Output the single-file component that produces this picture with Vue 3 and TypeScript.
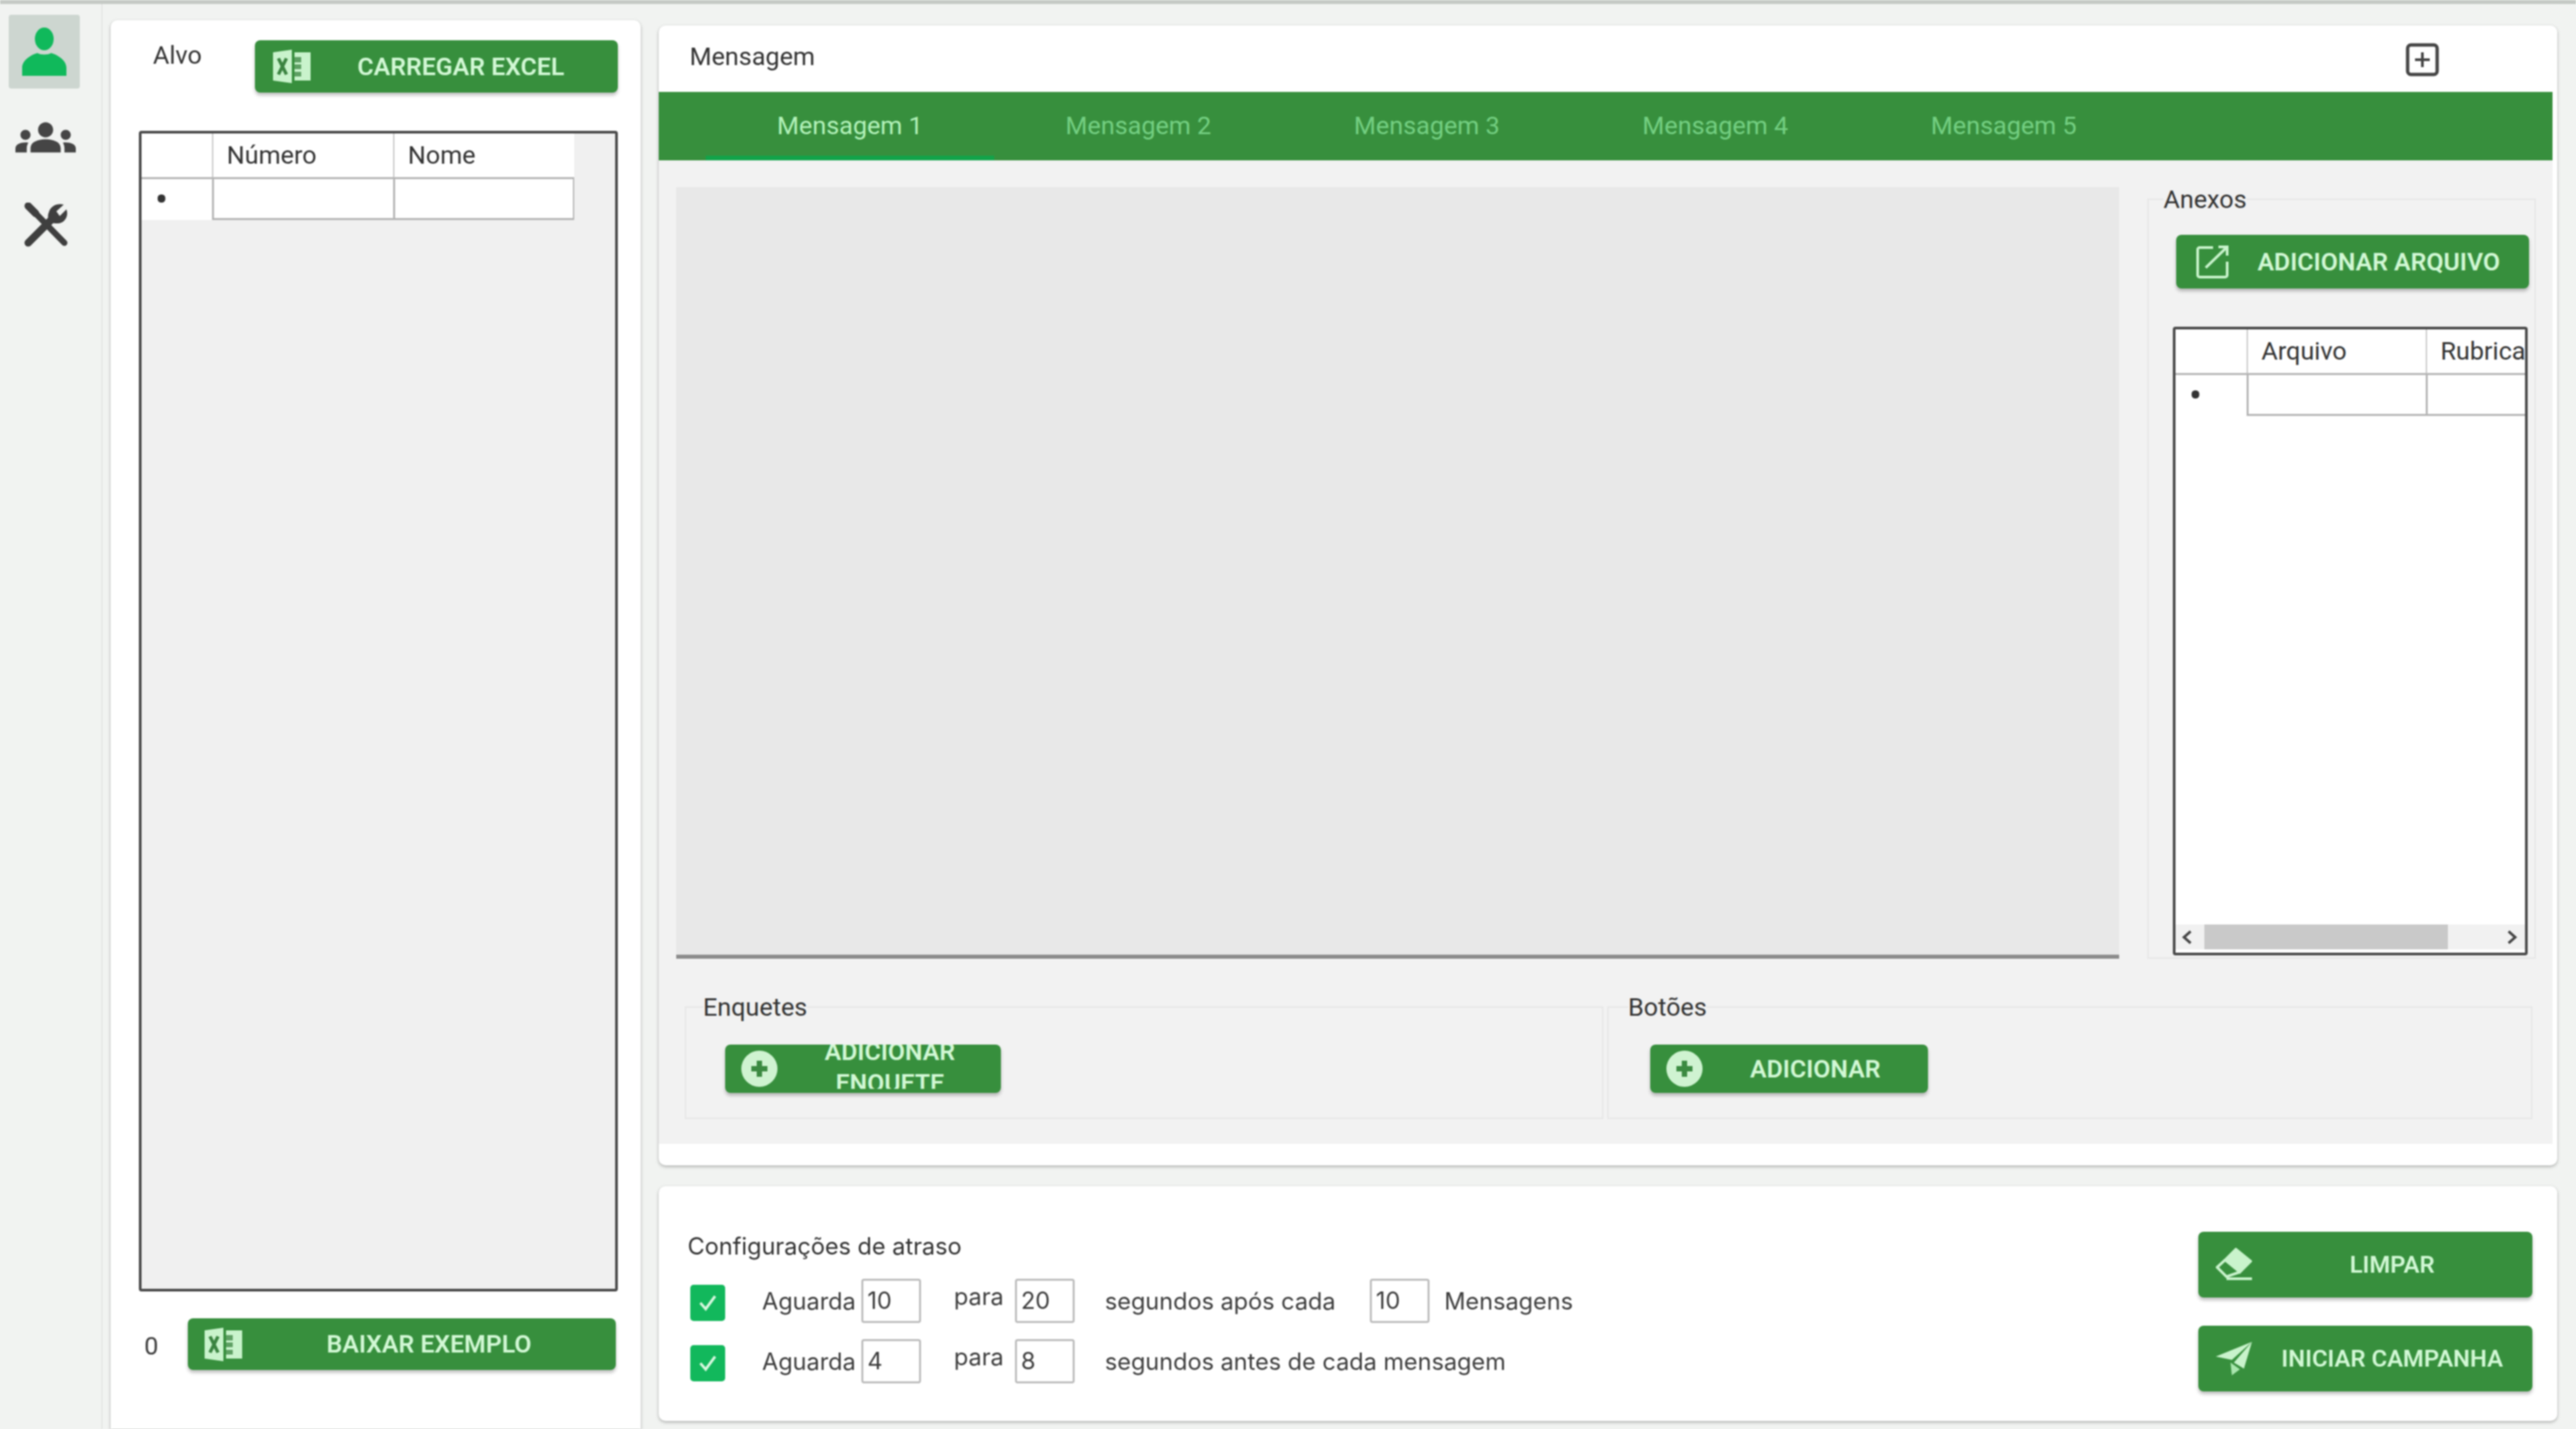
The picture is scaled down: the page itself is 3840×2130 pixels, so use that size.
<script setup lang="ts">
const tabs: string[] = ['Mensagem 1', 'Mensagem 2', 'Mensagem 3', 'Mensagem 4', 'Mensagem 5']
</script>

<template>
  <div class="app">
    <!-- Side rail -->
    <nav class="rail">
      <div class="rail-item active">
        <svg viewBox="0 0 68 72" width="68" height="72">
          <ellipse cx="34" cy="17" rx="14" ry="17" fill="#10b95b" />
          <path d="M1 72V60C1 48 16 40 24 38c3 3 17 3 20 0 8 2 23 10 23 22v12z" fill="#10b95b" />
        </svg>
      </div>
      <div class="rail-item group">
        <svg viewBox="0 2 24 18" width="90" height="68">
          <path fill="#454545" d="M12 12.75c1.63 0 3.07.39 4.24.9 1.08.48 1.76 1.56 1.76 2.73V18H6v-1.61c0-1.18.68-2.26 1.76-2.73 1.17-.52 2.61-.91 4.24-.91zM4 13c1.1 0 2-.9 2-2s-.9-2-2-2-2 .9-2 2 .9 2 2 2zm1.13 1.1c-.37-.06-.74-.1-1.13-.1-.99 0-1.93.21-2.78.58C.48 14.9 0 15.62 0 16.43V18h4.5v-1.61c0-.83.23-1.61.63-2.29zM20 13c1.1 0 2-.9 2-2s-.9-2-2-2-2 .9-2 2 .9 2 2 2zm4 3.43c0-.81-.48-1.53-1.22-1.85-.85-.37-1.79-.58-2.78-.58-.39 0-.76.04-1.13.1.4.68.63 1.46.63 2.29V18H24v-1.57zM12 6c1.66 0 3 1.34 3 3s-1.34 3-3 3-3-1.34-3-3 1.34-3 3-3z" />
        </svg>
      </div>
      <div class="rail-item tools">
        <svg viewBox="0 0 66 66" width="66" height="66" fill="none" stroke="#3f3f3f" stroke-linecap="round">
          <path d="M6 5 17 16" stroke-width="11" />
          <path d="M17 16 60 60" stroke-width="9" />
          <path d="M6 60 40 26" stroke-width="11" />
          <path d="M37 14C39 5 50 0 59 3L48 13 53 20 63 10C67 20 60 31 50 31 46 31 40 31 37 27 35 22 35 18 37 14z" fill="#3f3f3f" stroke="none" />
        </svg>
      </div>
    </nav>

    <!-- Target list -->
    <section class="card target">
      <div class="target-head">
        <span class="title alvo">Alvo</span>
        <button class="btn excel-top">
          <svg class="ico" viewBox="0 0 56 50" width="56" height="50">
            <path d="M0 4 28 0V50L0 46z" fill="#c9f3cc" />
            <path d="M8 13 20 37M20 13 8 37" stroke="#3a8340" stroke-width="5" />
            <path d="M32 4H56V46H32z" fill="#c9f3cc" />
            <path d="M32 11H42V19H32zM32 22H42V29H32zM32 33H42V40H32z" fill="#3a8340" opacity=".75" />
          </svg>
          <span class="btn-label">CARREGAR EXCEL</span>
        </button>
      </div>

      <div class="sheet target-sheet">
        <table class="grid">
          <colgroup><col style="width: 106px" /><col style="width: 270px" /><col style="width: 268px" /></colgroup>
          <thead>
            <tr><th></th><th>Número</th><th>Nome</th></tr>
          </thead>
          <tbody>
            <tr><td class="dot">•</td><td></td><td></td></tr>
          </tbody>
        </table>
      </div>

      <div class="target-foot">
        <span class="count">0</span>
        <button class="btn excel-bottom">
          <svg class="ico" viewBox="0 0 56 50" width="56" height="50">
            <path d="M0 4 28 0V50L0 46z" fill="#c9f3cc" />
            <path d="M8 13 20 37M20 13 8 37" stroke="#3a8340" stroke-width="5" />
            <path d="M32 4H56V46H32z" fill="#c9f3cc" />
            <path d="M32 11H42V19H32zM32 22H42V29H32zM32 33H42V40H32z" fill="#3a8340" opacity=".75" />
          </svg>
          <span class="btn-label">BAIXAR EXEMPLO</span>
        </button>
      </div>
    </section>

    <div class="main">
      <!-- Message editor -->
      <section class="card message">
        <header class="message-head">
          <span class="title">Mensagem</span>
          <svg class="add-tab" viewBox="0 0 50 50" width="50" height="50" fill="none" stroke="#444" stroke-width="5">
            <rect x="3" y="3" width="44" height="44" rx="5" />
            <path d="M25 14V36M14 25H36" stroke-width="4" />
          </svg>
        </header>

        <div class="tabs">
          <div v-for="(tab, i) in tabs" :key="tab" class="tab" :class="{ current: i === 0 }">{{ tab }}</div>
        </div>

        <div class="message-body">
          <div class="compose">
            <div class="editor"></div>
            <fieldset class="box anexos">
              <legend>Anexos</legend>
              <button class="btn add-file">
                <svg class="ico" viewBox="0 0 48 50" width="48" height="50" fill="none" stroke="#c9f3cc" stroke-width="4">
                  <path d="M25 4H5A3 3 0 0 0 2 7V45A3 3 0 0 0 5 48H43A3 3 0 0 0 46 45V25" />
                  <path d="M14 34 45 4M33 3H46V16" />
                </svg>
                <span class="btn-label">ADICIONAR ARQUIVO</span>
              </button>
              <div class="sheet files-sheet">
                <div class="files-view">
                  <table class="grid files-grid">
                    <colgroup><col style="width: 107px" /><col style="width: 267px" /><col style="width: 200px" /></colgroup>
                    <thead>
                      <tr><th></th><th>Arquivo</th><th>Rubrica</th></tr>
                    </thead>
                    <tbody>
                      <tr><td class="dot">•</td><td></td><td></td></tr>
                    </tbody>
                  </table>
                </div>
                <div class="scrollbar">
                  <svg viewBox="0 0 16 20" width="18" height="22" fill="none" stroke="#444" stroke-width="3.5"><path d="M13 2 4 10l9 8" /></svg>
                  <div class="track"><div class="thumb"></div></div>
                  <svg viewBox="0 0 16 20" width="18" height="22" fill="none" stroke="#444" stroke-width="3.5"><path d="M3 2l9 8-9 8" /></svg>
                </div>
              </div>
            </fieldset>
          </div>

          <div class="extras">
            <fieldset class="box enquetes">
              <legend>Enquetes</legend>
              <button class="btn add-small">
                <svg class="ico" viewBox="0 0 54 54" width="54" height="54">
                  <circle cx="27" cy="27" r="27" fill="#cff3d1" />
                  <path d="M27 15V39M15 27H39" stroke="#3b8a41" stroke-width="8" />
                </svg>
                <span class="btn-label wrap">ADICIONAR ENQUETE</span>
              </button>
            </fieldset>
            <fieldset class="box botoes">
              <legend>Botões</legend>
              <button class="btn add-small wide">
                <svg class="ico" viewBox="0 0 54 54" width="54" height="54">
                  <circle cx="27" cy="27" r="27" fill="#cff3d1" />
                  <path d="M27 15V39M15 27H39" stroke="#3b8a41" stroke-width="8" />
                </svg>
                <span class="btn-label">ADICIONAR</span>
              </button>
            </fieldset>
          </div>
        </div>
      </section>

      <!-- Delay settings -->
      <section class="card delay">
        <div class="delay-form">
          <div class="delay-title">Configurações de atraso</div>
          <div class="delay-row">
            <span class="check"><svg viewBox="0 0 30 30" width="30" height="30" fill="none" stroke="#d8f7df" stroke-width="4"><path d="M4 15 12 24 26 5" /></svg></span>
            <span class="wait">Aguarda</span>
            <span class="field">10</span>
            <span class="para">para</span>
            <span class="field">20</span>
            <span class="secs after">segundos após cada</span>
            <span class="field">10</span>
            <span class="msgs">Mensagens</span>
          </div>
          <div class="delay-row">
            <span class="check"><svg viewBox="0 0 30 30" width="30" height="30" fill="none" stroke="#d8f7df" stroke-width="4"><path d="M4 15 12 24 26 5" /></svg></span>
            <span class="wait">Aguarda</span>
            <span class="field">4</span>
            <span class="para">para</span>
            <span class="field">8</span>
            <span class="secs">segundos antes de cada mensagem</span>
          </div>
        </div>

        <div class="actions">
          <button class="btn action">
            <svg class="ico" viewBox="0 0 54 50" width="54" height="50" fill="none" stroke="#c9f3cc" stroke-width="4">
              <path d="M30 2 52 20 36 36 14 18z" fill="#c9f3cc" />
              <path d="M14 18 2 29 16 43 36 36M16 46H54" />
            </svg>
            <span class="btn-label">LIMPAR</span>
          </button>
          <button class="btn action">
            <svg class="ico" viewBox="0 0 54 50" width="54" height="50">
              <path d="M0 22 54 0 24 27z" fill="#c9f3cc" />
              <path d="M54 0 42 40 27 31z" fill="#c9f3cc" />
              <path d="M22 31 36 41 24 50z" fill="#a9e6ae" />
            </svg>
            <span class="btn-label">INICIAR CAMPANHA</span>
          </button>
        </div>
      </section>
    </div>
  </div>
</template>

<style>
html, body { margin: 0; background: #f1f3f1; }
</style>

<style scoped>
.app {
  display: flex;
  box-sizing: border-box;
  width: 3840px;
  height: 2130px;
  background: #f1f3f1;
  border-top: 6px solid #c5cac5;
  font-family: Roboto, "Liberation Sans", sans-serif;
  font-size: 37.5px;
  color: #3d3d3d;
  filter: blur(1.1px);
}

.rail {
  display: flex;
  flex-direction: column;
  align-items: center;
  flex: none;
  width: 153px;
  padding-top: 16px;
  box-sizing: border-box;
  border-right: 2px solid #e4e6e4;
}
.rail-item {
  display: flex;
  align-items: center;
  justify-content: center;
  width: 106px;
  height: 110px;
  margin-left: -19px;
}
.rail-item.active { background: #cdd6d0; border-radius: 4px; margin-bottom: 12px; }
.rail-item.group { height: 114px; margin-bottom: 23px; }
.rail-item.group svg { margin-left: 3px; }
.rail-item.tools { height: 114px; }
.rail-item.tools svg { margin-left: 5px; margin-top: -6px; }

.card {
  background: #fff;
  border-radius: 10px;
  box-shadow: 0 2px 5px rgba(0, 0, 0, 0.28);
}
.title { color: #333; }

.btn {
  display: flex;
  align-items: center;
  box-sizing: border-box;
  padding: 0;
  border: 0;
  border-radius: 8px;
  background: #378f3d;
  box-shadow: 0 4px 5px rgba(0, 0, 0, 0.25);
  color: #d2f8d5;
  font-family: inherit;
  font-size: 37px;
  font-weight: 600;
  overflow: hidden;
}
.btn-label { flex: 1; text-align: center; }
.ico { flex: none; }

.target {
  display: flex;
  flex-direction: column;
  flex: none;
  box-sizing: border-box;
  width: 790px;
  margin: 24px 0 0 12px;
  padding: 30px 34px 88px 42px;
  border-radius: 10px 10px 0 0;
}
.target-head { display: flex; align-items: flex-start; }
.alvo { margin: 0 0 0 21px; }
.excel-top { width: 541px; height: 78px; margin-left: auto; padding: 0 10px 0 27px; }

.sheet {
  box-sizing: border-box;
  border: 4px solid #4a4a4a;
  border-radius: 4px;
  overflow: hidden;
}
.target-sheet { flex: 1; margin-top: 57px; background: #f0f0f0; }

.grid {
  border-collapse: collapse;
  table-layout: fixed;
  width: 644px;
  background: #fff;
  color: #333;
}
.files-grid { width: 574px; }
.grid th {
  height: 63px;
  padding: 0 0 2px 20px;
  font-weight: 400;
  text-align: left;
  white-space: nowrap;
  overflow: hidden;
  border-left: 2px solid #c8c8c8;
  border-bottom: 3px solid #b5b5b5;
}
.grid th:first-child { border-left: 0; }
.grid td {
  height: 58px;
  padding: 0;
  border-left: 3px solid #b5b5b5;
  border-right: 2px solid #b5b5b5;
  border-bottom: 3px solid #b5b5b5;
}
.grid td.dot {
  padding-left: 20px;
  border: 0;
  background: #fff;
  font-size: 58px;
  line-height: 1;
}

.target-foot { display: flex; align-items: center; margin-top: 40px; }
.count { margin: 4px 0 0 8px; }
.excel-bottom { width: 638px; height: 77px; margin-left: auto; margin-right: 3px; padding-left: 25px; }

.main {
  display: flex;
  flex-direction: column;
  flex: none;
  width: 2830px;
  margin: 32px 0 0 27px;
  gap: 31px;
}

.message {
  display: flex;
  flex-direction: column;
  height: 1699px;
}
.message-head {
  display: flex;
  align-items: center;
  justify-content: space-between;
  flex: none;
  height: 99px;
  padding: 0 176px 8px 46px;
  box-sizing: border-box;
}
.add-tab { margin-top: 10px; }
.tabs {
  display: flex;
  flex: none;
  height: 102px;
  margin-right: 7px;
  padding-left: 70px;
  background: #378f3d;
}
.tab {
  width: 430px;
  line-height: 100px;
  text-align: center;
  color: #74cf82;
}
.tab.current { color: #b3f2ba; box-shadow: inset 0 -7px 0 #12a34a; }

.message-body {
  flex: none;
  box-sizing: border-box;
  height: 1466px;
  margin-right: 7px;
  padding: 40px 0 0 26px;
  background: #f2f2f2;
}
.compose { display: flex; height: 1150px; }
.editor {
  flex: none;
  width: 2151px;
  background: #e8e8e8;
  border-bottom: 6px solid #8c8c8c;
  box-sizing: border-box;
}

.box {
  margin: 0;
  padding: 0;
  border: 2px solid #e6e6e6;
  min-width: 0;
  box-sizing: border-box;
}
.box legend {
  padding: 0;
  line-height: 36px;
  color: #333;
}
.anexos {
  flex: none;
  width: 579px;
  margin-left: 42px;
  padding: 0 10px 0 36px;
  height: 1150px;
}
.anexos legend { margin-left: -14px; }
.add-file { width: 526px; height: 80px; margin: 35px 0 0 5px; padding-left: 30px; }
.files-sheet {
  display: flex;
  flex-direction: column;
  width: 529px;
  height: 937px;
  margin-top: 57px;
  background: #fff;
}
.files-view { flex: 1; overflow: hidden; }
.scrollbar {
  display: flex;
  align-items: center;
  justify-content: space-between;
  flex: none;
  height: 37px;
  margin-bottom: 5px;
  padding: 0 10px 0 8px;
  background: #f1f1f1;
}
.track { flex: 1; padding: 0 87px 0 17px; }
.thumb { height: 37px; background: #c9c9c9; }

.extras { display: flex; gap: 6px; margin: 54px 0 0 13px; }
.enquetes, .botoes { height: 185px; padding-left: 58px; }
.enquetes { width: 1369px; }
.botoes { width: 1379px; padding-left: 62px; }
.enquetes legend { margin-left: -33px; }
.botoes legend { margin-left: -33px; }
.add-small { width: 411px; height: 72px; margin-top: 38px; padding-left: 24px; }
.add-small.wide { width: 414px; }
.wrap {
  display: flex;
  align-items: center;
  justify-content: center;
  align-self: flex-start;
  height: 66px;
  padding: 2px 42px 0 44px;
  box-sizing: border-box;
  line-height: 47px;
  overflow: hidden;
}

.delay {
  display: flex;
  justify-content: space-between;
  height: 350px;
  padding: 68px 37px 0 47px;
  box-sizing: border-box;
  font-family: Inter, Roboto, sans-serif;
  font-size: 35px;
}
.delay-title { margin: 3px 0 31px -4px; line-height: 36px; color: #333; }
.delay-row { display: flex; align-items: center; height: 66px; margin-bottom: 24px; color: #3d3d3d; }
.check {
  display: flex;
  align-items: center;
  justify-content: center;
  flex: none;
  width: 52px;
  height: 54px;
  margin-top: 6px;
  border-radius: 5px;
  background: #12b85c;
}
.wait { width: 148px; margin-left: 55px; }
.field {
  flex: none;
  box-sizing: border-box;
  width: 89px;
  height: 66px;
  padding: 0 0 0 6px;
  border: 3px solid #bdbdbd;
  border-radius: 4px;
  line-height: 58px;
}
.para { width: 91px; margin-left: 49px; position: relative; top: -7px; }
.secs { margin-left: 45px; white-space: nowrap; }
.secs.after { width: 350px; margin-right: 45px; }
.msgs { margin-left: 22px; }

.actions { display: flex; flex-direction: column; gap: 42px; font-family: Roboto, sans-serif; }
.action { width: 498px; height: 98px; padding-left: 26px; }
.action .btn-label { font-size: 35.5px; }
</style>
